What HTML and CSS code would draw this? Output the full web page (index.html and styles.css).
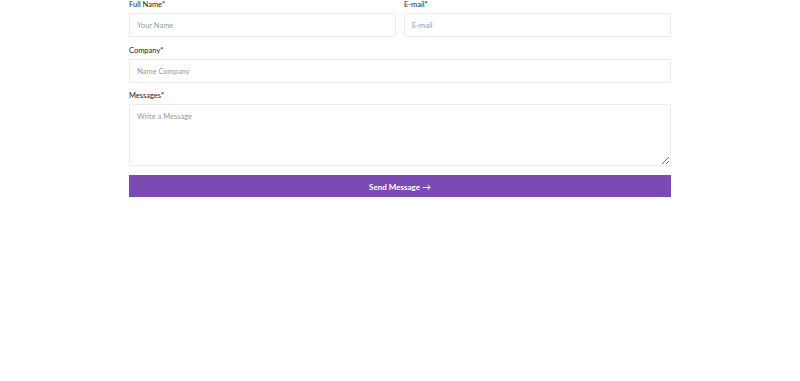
FILE: index.html
```html
<!DOCTYPE html>
<html lang="en">
<head>
    <meta charset="UTF-8">
    <meta name="viewport" content="width=device-width, initial-scale=1.0">
    <title>Contact</title>
    <link rel="stylesheet" href="styles.css">
</head>
<body>
    <form class="contact-form">
        <div class="form-row">
            <div class="field">
                <label for="fullName">Full Name*</label>
                <input type="text" id="fullName" placeholder="Your Name">
            </div>
            <div class="field">
                <label for="email">E-mail*</label>
                <input type="text" id="email" placeholder="E-mail">
            </div>
        </div>
        <div class="field">
            <label for="company">Company*</label>
            <input type="text" id="company" placeholder="Name Company">
        </div>
        <div class="field message-field">
            <label for="message">Messages*</label>
            <textarea id="message" placeholder="Write a Message"></textarea>
        </div>
        <button type="button" class="send-button">Send Message <span class="arrow">&#8594;</span></button>
    </form>
</body>
</html>
```

FILE: styles.css
```css
body {
    margin: 0;
    font-family: Lato, "Open Sans", sans-serif;
    background-color: white;
    color: #1f1f1f;
}

.contact-form {
    width: 542px;
    margin: 0 auto;
    display: flex;
    flex-direction: column;
    gap: 9px;
}

.form-row {
    display: grid;
    grid-template-columns: 1fr 1fr;
    gap: 8px;
}

.field {
    display: flex;
    flex-direction: column;
    gap: 3px;
}

.message-field {
    margin-top: -1px;
}

.field label {
    font-size: 7.5px;
    line-height: 10px;
    font-weight: 400;
    color: #1a1a1a;
}

.field input,
.field textarea {
    box-sizing: border-box;
    width: 100%;
    border: 1px solid #ececec;
    border-radius: 1px;
    padding: 0 7px;
    font-family: inherit;
    font-size: 7.5px;
    color: #333;
    background: white;
    outline: none;
}

.field input {
    height: 24px;
}

.field textarea {
    height: 62px;
    padding-top: 7px;
    resize: vertical;
}

.field input::placeholder,
.field textarea::placeholder {
    color: #999;
}

.send-button {
    height: 22px;
    border: none;
    background-color: #7b4bb3;
    color: white;
    font-family: inherit;
    font-size: 8px;
    font-weight: 700;
    cursor: pointer;
}

.arrow {
    font-size: 9px;
    font-weight: 400;
}
```
